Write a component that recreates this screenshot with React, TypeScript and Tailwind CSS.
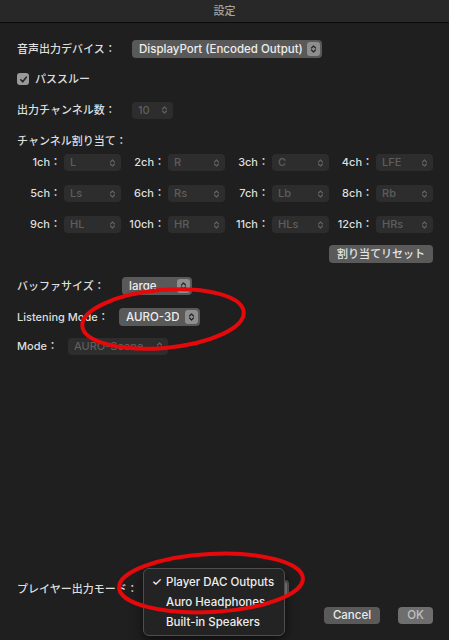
import React from 'react';

function Chevrons({ className }: { className?: string }) {
  return (
    <svg width="7" height="10" viewBox="0 0 7 10" className={className} fill="none" stroke="currentColor" strokeWidth="1.2" strokeLinecap="round" strokeLinejoin="round">
      <path d="M1.5 4 L3.5 2 L5.5 4" />
      <path d="M1.5 6 L3.5 8 L5.5 6" />
    </svg>
  );
}

function PopUp({ value, width, disabled }: { value: string; width: string; disabled?: boolean }) {
  if (disabled) {
    return (
      <div className={`${width} h-[17px] rounded-[4px] bg-[#2d2d2d] flex items-center justify-between pl-[6px] pr-[5px] text-[#5e5e5e]`}>
        <span className="whitespace-nowrap overflow-hidden leading-[15px]">{value}</span>
        <Chevrons className="text-[#606060] shrink-0" />
      </div>
    );
  }
  return (
    <div className={`${width} h-[18px] rounded-[4px] bg-[#595959] flex items-center justify-between pl-[7px] pr-[2px] text-[#ededed] text-[11.5px]`}>
      <span className="whitespace-nowrap overflow-hidden leading-[16px]">{value}</span>
      <span className="w-[13px] h-[14px] rounded-[3px] bg-[#8e8e8e] flex items-center justify-center text-[#262626] shrink-0">
        <Chevrons />
      </span>
    </div>
  );
}

const channels = [
  ['1ch', 'L'], ['2ch', 'R'], ['3ch', 'C'], ['4ch', 'LFE'],
  ['5ch', 'Ls'], ['6ch', 'Rs'], ['7ch', 'Lb'], ['8ch', 'Rb'],
  ['9ch', 'HL'], ['10ch', 'HR'], ['11ch', 'HLs'], ['12ch', 'HRs'],
];

export default function App() {
  return (
    <div className="relative w-[449px] h-[640px] overflow-hidden bg-[#1f1f1f] text-[11px] font-medium text-[#dedede] font-['Inter','Noto_Sans_CJK_JP',sans-serif] flex flex-col">
      <div className="h-[23px] shrink-0 bg-[#282828] border-b border-[#0b0b0b] flex items-center justify-center text-[#a4a4a4]">
        設定
      </div>

      <div className="flex flex-col pl-[17px] pr-[16px]">
        <div className="mt-[17px] h-[18px] flex items-center">
          <span className="w-[115px]">音声出力デバイス：</span>
          <PopUp value="DisplayPort (Encoded Output)" width="w-[190px]" />
        </div>

        <div className="mt-[12px] h-[18px] flex items-center gap-[6px]">
          <span className="w-[12px] h-[12px] rounded-[3px] bg-[#9a9a9a] flex items-center justify-center">
            <svg width="9" height="9" viewBox="0 0 9 9" fill="none" stroke="#262626" strokeWidth="1.6" strokeLinecap="round" strokeLinejoin="round">
              <path d="M1.8 4.8 L3.7 6.8 L7.3 2.2" />
            </svg>
          </span>
          <span>パススルー</span>
        </div>

        <div className="mt-[13px] h-[18px] flex items-center">
          <span className="w-[115px]">出力チャンネル数：</span>
          <PopUp value="10" width="w-[41px]" disabled />
        </div>

        <div className="mt-[13px] h-[18px] flex items-center">チャンネル割り当て：</div>

        <div className="mt-[4px] grid grid-cols-4 gap-y-[14px]">
          {channels.map(([ch, v]) => (
            <div key={ch} className="flex items-center justify-end gap-[3px]">
              <span>{ch}：</span>
              <PopUp value={v} width="w-[57px]" disabled />
            </div>
          ))}
        </div>

        <div className="mt-[12px] flex justify-end">
          <div className="w-[104px] h-[18px] rounded-[4px] bg-[#5a5a5a] flex items-center justify-center text-[#e6e6e6]">
            割り当てリセット
          </div>
        </div>

        <div className="mt-[14px] h-[18px] flex items-center">
          <span className="w-[105px]">バッファサイズ：</span>
          <PopUp value="large" width="w-[70px]" />
        </div>

        <div className="mt-[13px] h-[18px] flex items-center">
          <span className="w-[102px]">Listening Mode：</span>
          <PopUp value="AURO-3D" width="w-[81px]" />
        </div>

        <div className="mt-[11px] h-[18px] flex items-center">
          <span className="w-[51px]">Mode：</span>
          <PopUp value="AURO-Scene" width="w-[100px]" disabled />
        </div>
      </div>

      <div className="flex-1" />

      <div className="pl-[17px] pr-[16px] pb-[16px]">
        <div className="h-[18px] flex items-center">
          <span className="w-[128px]">プレイヤー出力モード：</span>
          <PopUp value="" width="w-[144px]" />
        </div>
        <div className="mt-[9px] flex justify-end gap-[18px] text-[11.5px]">
          <div className="w-[56px] h-[17px] rounded-[4px] bg-[#5a5a5a] flex items-center justify-center text-[#eaeaea]">Cancel</div>
          <div className="w-[35px] h-[17px] rounded-[4px] bg-[#6e6e6e] flex items-center justify-center text-[#c0c0c0]">OK</div>
        </div>
      </div>

      {/* open menu of the player output popup */}
      <div className="absolute left-[143px] top-[568px] w-[142px] h-[68px] rounded-[6px] border border-[#4e4e4e] bg-[#232323] shadow-[0_4px_12px_rgba(0,0,0,0.6)] py-[4px] text-[#ededed] text-[11.5px]">
        <div className="h-[20px] flex items-center">
          <span className="w-[22px] text-right pr-[4px]">✓</span>
          <span>Player DAC Outputs</span>
        </div>
        <div className="h-[20px] flex items-center pl-[22px]">Auro Headphones</div>
        <div className="h-[20px] flex items-center pl-[22px]">Built-in Speakers</div>
      </div>

      {/* red annotation ellipses */}
      <svg className="absolute left-0 top-0 pointer-events-none" width="449" height="640" viewBox="0 0 449 640" fill="none">
        <ellipse cx="163" cy="319" rx="81" ry="29" stroke="#e5090c" strokeWidth="4" transform="rotate(-5 163 319)" />
        <ellipse cx="211" cy="583" rx="92" ry="29" stroke="#e5090c" strokeWidth="4" transform="rotate(-3 211 583)" />
      </svg>
    </div>
  );
}
